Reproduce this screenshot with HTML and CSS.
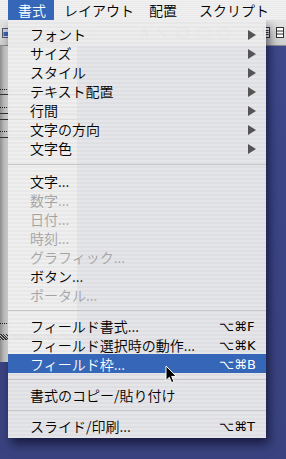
FILE: index.html
```html
<!DOCTYPE html>
<html lang="ja">
<head>
<meta charset="utf-8">
<link rel="stylesheet" href="styles.css">
</head>
<body>
<div class="screen">
  <div class="menubar">
    <span class="mtitle active">書式</span>
    <span class="mtitle t-layout">レイアウト</span>
    <span class="mtitle t-arrange">配置</span>
    <span class="mtitle t-script">スクリプト</span>
  </div>
  <div class="desk">
    <div class="toolbar">
      <svg class="ti ti-pic" width="6" height="10" viewBox="0 0 6 10"><rect x="0.5" y="0.5" width="8" height="9" fill="#c9d3e6" stroke="#556"/><rect x="1.5" y="4" width="5" height="4" fill="#3a64b0"/></svg>
      <span class="ti ti-q">?</span>
      <span class="ti ti-a">A</span>
      <svg class="ti ti-line" width="10" height="10" viewBox="0 0 10 10"><path d="M1 1 L9 9" stroke="#666" stroke-width="1.2"/></svg>
      <svg class="ti ti-rect" width="11" height="10" viewBox="0 0 11 10"><rect x="0.5" y="0.5" width="10" height="9" fill="none" stroke="#666"/></svg>
      <svg class="ti ti-rrect" width="14" height="10" viewBox="0 0 14 10"><rect x="0.5" y="0.5" width="13" height="9" rx="4" fill="none" stroke="#666"/></svg>
      <svg class="ti ti-oval" width="12" height="10" viewBox="0 0 12 10"><ellipse cx="6" cy="5" rx="5.5" ry="4.5" fill="none" stroke="#666"/></svg>
      <svg class="ti ti-doc" width="7" height="11" viewBox="0 0 7 11"><rect x="0.5" y="0.5" width="6" height="10" fill="#fff" stroke="#333"/><path d="M1.5 3.5 H5.5 M1.5 5.5 H5.5 M1.5 7.5 H5.5" stroke="#333"/></svg>
      <svg class="ti ti-grid" width="8" height="11" viewBox="0 0 8 11"><rect x="0.5" y="0.5" width="7" height="10" fill="#fff" stroke="#333"/><path d="M0.5 4 H7.5 M0.5 7 H7.5" stroke="#333"/></svg>
    </div>
    <div class="docwin">
      <div class="ln dot l1"></div>
      <div class="ln solid l2"></div>
      <div class="ln dot l3"></div>
      <div class="ln solid l4"></div>
      <div class="ln solid l5"></div>
      <div class="ln dot l6"></div>
      <div class="ln solid l7"></div>
      <div class="ln dot l8"></div>
      <div class="checker"></div>
    </div>
  </div>

  <div class="menu">
    <div class="item"><span class="label">フォント</span><span class="sub"></span></div>
    <div class="item"><span class="label">サイズ</span><span class="sub"></span></div>
    <div class="item"><span class="label">スタイル</span><span class="sub"></span></div>
    <div class="item"><span class="label">テキスト配置</span><span class="sub"></span></div>
    <div class="item"><span class="label">行間</span><span class="sub"></span></div>
    <div class="item"><span class="label">文字の方向</span><span class="sub"></span></div>
    <div class="item"><span class="label">文字色</span><span class="sub"></span></div>
    <div class="sep sep-first"></div>
    <div class="item"><span class="label">文字...</span></div>
    <div class="item dis"><span class="label">数字...</span></div>
    <div class="item dis"><span class="label">日付...</span></div>
    <div class="item dis"><span class="label">時刻...</span></div>
    <div class="item dis"><span class="label">グラフィック...</span></div>
    <div class="item"><span class="label">ボタン...</span></div>
    <div class="item dis"><span class="label">ポータル...</span></div>
    <div class="sep"></div>
    <div class="item"><span class="label">フィールド書式...</span><span class="sc">⌥⌘F</span></div>
    <div class="item"><span class="label">フィールド選択時の動作...</span><span class="sc">⌥⌘K</span></div>
    <div class="item sel"><span class="label">フィールド枠...</span><span class="sc">⌥⌘B</span></div>
    <div class="sep"></div>
    <div class="item"><span class="label">書式のコピー/貼り付け</span></div>
    <div class="sep"></div>
    <div class="item"><span class="label">スライド/印刷...</span><span class="sc">⌥⌘T</span></div>
  </div>

  <svg class="cursor" width="13" height="19" viewBox="0 0 13 19">
    <path d="M1 1 L1 15.5 L4.3 12.3 L6.6 17.6 L8.9 16.6 L6.7 11.4 L11.3 11.4 Z" fill="#000" stroke="#fff" stroke-width="1" stroke-linejoin="round"/>
  </svg>
</div>
</body>
</html>
```

FILE: styles.css
```css
html, body {
  margin: 0;
  padding: 0;
}

body {
  width: 286px;
  height: 459px;
  overflow: hidden;
  font-family: "Noto Sans CJK JP", "Noto Sans", sans-serif;
  font-weight: 350;
}

.screen {
  position: relative;
  width: 286px;
  height: 459px;
  display: flex;
  flex-direction: column;
  background: linear-gradient(to bottom, #3f4a8d 0%, #3b4484 60%, #3a4380 100%);
  overflow: hidden;
}

/* ---------- menu bar ---------- */
.menubar {
  height: 20px;
  flex: none;
  display: flex;
  padding-left: 8px;
  background: repeating-linear-gradient(to bottom, #f1f1f1 0, #f1f1f1 1px, #e9e9e9 1px, #e9e9e9 2px);
  font-size: 14px;
  line-height: 20px;
  color: #000;
  position: relative;
  z-index: 3;
}

.mtitle {
  white-space: nowrap;
}

.mtitle.active {
  background: #3566b8;
  color: #fff;
  padding: 0 8px 0 10px;
}

.t-layout { margin-left: 10px; }
.t-arrange { margin-left: 15px; }
.t-script { margin-left: 22px; }

/* ---------- desktop behind ---------- */
.desk {
  flex: 1;
  display: flex;
  flex-direction: column;
}

.toolbar {
  height: 25px;
  flex: none;
  display: flex;
  align-items: center;
  background: linear-gradient(to bottom, #e4e4e4, #cfcfcf);
  border-bottom: 1px solid #8c8c8c;
  color: #666;
  font-family: "Liberation Serif", serif;
  font-size: 13px;
}

.ti { flex: none; display: block; }
.ti-pic { margin-left: 2px; }
.ti-q { margin-left: 77px; font-family: "Liberation Sans", sans-serif; font-size: 11px; color: #999; }
.ti-a { margin-left: 48px; font-size: 14px; color: #777; }
.ti-line { margin-left: 8px; }
.ti-rect { margin-left: 10px; }
.ti-rrect { margin-left: 9px; }
.ti-oval { margin-left: 7px; }
.ti-doc { margin-left: 33px; }
.ti-grid { margin-left: 6px; }

.docwin {
  width: 77px;
  height: 316px;
  flex: none;
  display: flex;
  flex-direction: column;
  background: linear-gradient(to right, #8e8e8e 0, #cdcdcd 5px, #efefef 8px, #ffffff 14px);
}

.ln { height: 1px; flex: none; }
.ln.dot { background: repeating-linear-gradient(to right, #222 0, #222 1px, transparent 1px, transparent 2px); }
.ln.solid { background: #333; }
.l1 { margin-top: 43px; }
.l2 { margin-top: 4px; background: #777; }
.l3 { margin-top: 12px; }
.l4 { margin-top: 5px; }
.l5 { margin-top: 5px; }
.l6 { margin-top: 11px; }
.l7 { margin-top: 5px; }
.l8 { margin-top: 185px; }

.checker {
  margin-top: 10px;
  height: 6px;
  background:
    repeating-linear-gradient(45deg, #333 0, #333 1px, #ccc 1px, #ccc 2px);
}

/* ---------- dropdown menu ---------- */
.menu {
  position: absolute;
  top: 20px;
  left: 8px;
  width: 258px;
  padding: 4px 0 3px;
  background: repeating-linear-gradient(to bottom,
    rgba(238, 238, 238, 0.95) 0, rgba(238, 238, 238, 0.95) 2px,
    rgba(231, 231, 232, 0.95) 2px, rgba(231, 231, 232, 0.95) 4px);
  box-shadow: 3px 6px 10px rgba(0, 0, 20, 0.6);
  font-size: 14px;
  color: #000;
  z-index: 2;
}

.item {
  height: 19px;
  box-sizing: border-box;
  padding: 2px 10px 0 22px;
  display: flex;
  align-items: center;
}

.label {
  flex: 1;
  white-space: nowrap;
  line-height: 17px;
}

.sub {
  flex: none;
  width: 0;
  height: 0;
  border-left: 8px solid #545454;
  border-top: 5px solid transparent;
  border-bottom: 5px solid transparent;
}

.sc {
  flex: none;
  width: 37px;
  font-family: "DejaVu Sans", sans-serif;
  font-weight: 400;
  font-size: 13px;
  line-height: 17px;
  white-space: nowrap;
}

.dis { color: #a3a3a3; }

.sel {
  background: #3566b8;
  color: #fff;
}

.sep {
  height: 12px;
  display: flex;
  align-items: center;
}

.sep::after {
  content: "";
  flex: 1;
  height: 1px;
  background: #c6c6c6;
}

.sep-first { height: 14px; }

/* ---------- pointer ---------- */
.cursor {
  position: absolute;
  left: 165px;
  top: 365px;
  z-index: 5;
}
```
